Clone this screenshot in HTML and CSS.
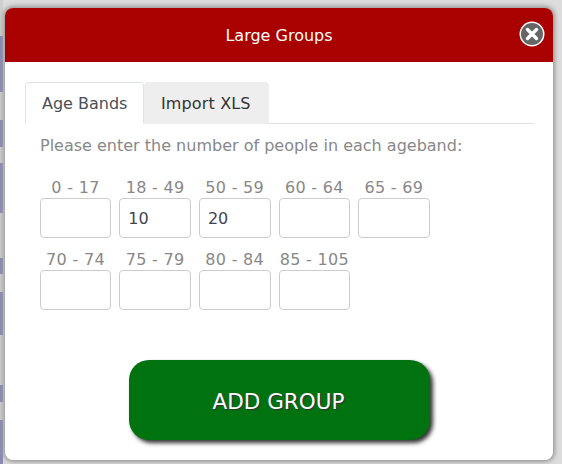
FILE: index.html
```html
<!DOCTYPE html>
<html lang="en">
<head>
  <meta charset="UTF-8">
  <meta name="viewport" content="width=device-width, initial-scale=1.0">
  <title>Large Groups</title>
  <link rel="stylesheet" href="styles.css">
</head>
<body>
  <div class="modal">
    <div class="modal-header">
      <h1>Large Groups</h1>
      <button type="button" class="close" aria-label="Close">
        <svg width="26" height="26" viewBox="0 0 26 26">
          <circle cx="13" cy="13" r="11.75" fill="#666" stroke="#fff" stroke-width="1.5"/>
          <path d="M8.5 8.5 L17.5 17.5 M17.5 8.5 L8.5 17.5" stroke="#fff" stroke-width="3.4" stroke-linecap="round"/>
        </svg>
      </button>
    </div>
    <div class="modal-body">
      <div class="tabs">
        <a class="tab active">Age Bands</a>
        <a class="tab">Import XLS</a>
      </div>
      <div class="pane">
        <p class="intro">Please enter the number of people in each ageband:</p>
        <div class="bands">
          <label class="band">0 - 17<input type="text"></label>
          <label class="band">18 - 49<input type="text" value="10"></label>
          <label class="band">50 - 59<input type="text" value="20"></label>
          <label class="band">60 - 64<input type="text"></label>
          <label class="band">65 - 69<input type="text"></label>
          <label class="band">70 - 74<input type="text"></label>
          <label class="band">75 - 79<input type="text"></label>
          <label class="band">80 - 84<input type="text"></label>
          <label class="band">85 - 105<input type="text"></label>
        </div>
        <button type="button" class="add-group">ADD GROUP</button>
      </div>
    </div>
  </div>
</body>
</html>
```

FILE: styles.css
```css
* { box-sizing: border-box; }
html, body { height: 100%; }
body {
  margin: 0;
  padding: 8px 9px 4px 5px;
  overflow: hidden;
  font-family: "DejaVu Sans", sans-serif;
  background:
    linear-gradient(to bottom,
      #cfcfcf 36px, #8a8ab6 36px, #8a8ab6 92px,
      #cfcfcf 92px, #cfcfcf 120px, #8a8ab6 120px, #8a8ab6 147px,
      #cfcfcf 147px, #cfcfcf 163px, #8a8ab6 163px, #8a8ab6 213px,
      #cfcfcf 213px, #cfcfcf 258px, #8a8ab6 258px, #8a8ab6 274px,
      #cfcfcf 274px, #cfcfcf 292px, #8a8ab6 292px, #8a8ab6 335px,
      #cfcfcf 335px, #cfcfcf 385px, #8a8ab6 385px, #8a8ab6 402px,
      #cfcfcf 402px, #cfcfcf 420px, #8a8ab6 420px) left top / 3px 100% no-repeat,
    #dcdcdc;
}
.modal {
  height: 452px;
  background: #fff;
  border-radius: 8px;
  overflow: hidden;
  box-shadow: 0 0 4px 2px #999;
}
.modal-header {
  position: relative;
  height: 54px;
  display: flex;
  align-items: center;
  justify-content: center;
  background: #a90000;
}
.modal-header h1 {
  margin: 0;
  font-size: 16px;
  font-weight: normal;
  color: #fff;
}
.close {
  position: absolute;
  top: 13px;
  right: 8px;
  padding: 0;
  border: 0;
  background: none;
  line-height: 0;
}
.modal-body { padding: 20px 19px 0 20px; }
.tabs {
  display: flex;
  height: 42px;
  border-bottom: 1px solid #dee2e6;
}
.tab {
  height: 42px;
  padding: 0 17px 0 15.5px;
  display: flex;
  align-items: center;
  font-size: 16px;
  color: #333;
  background: #eee;
  border: 1px solid transparent;
  border-radius: 4px 4px 0 0;
  letter-spacing: 0.15px;
}
.tab.active {
  padding: 0 16px;
  color: #495057;
  background: #fff;
  border-color: #dee2e6 #dee2e6 #fff;
  letter-spacing: 0;
}
.pane { padding: 0 15px; }
.intro {
  margin: 12px 0 22px;
  font-size: 16px;
  line-height: 20px;
  color: #888;
}
.bands {
  display: grid;
  grid-template-columns: repeat(5, 1fr);
  gap: 12px 8px;
  width: 390px;
  margin-left: -0.3px;
}
.band {
  display: block;
  text-align: center;
  font-size: 16px;
  line-height: 20px;
  letter-spacing: 0.3px;
  color: #888;
}
.band input {
  display: block;
  width: 100%;
  height: 40px;
  padding: 0 8px;
  font: 16px "DejaVu Sans", sans-serif;
  color: #3f4453;
  border: 1px solid #ccc;
  border-radius: 4px;
}
.add-group {
  display: block;
  width: 301px;
  height: 80px;
  margin: 50px 0 0 89px;
  padding: 2px 8px 0 6px;
  font: 21.5px "DejaVu Sans", sans-serif;
  color: #fff;
  background: #007310;
  border: 0;
  border-radius: 20px;
  box-shadow: 3px 3px 4px #333;
  text-shadow: 1px 1px 1px #333;
}
```
